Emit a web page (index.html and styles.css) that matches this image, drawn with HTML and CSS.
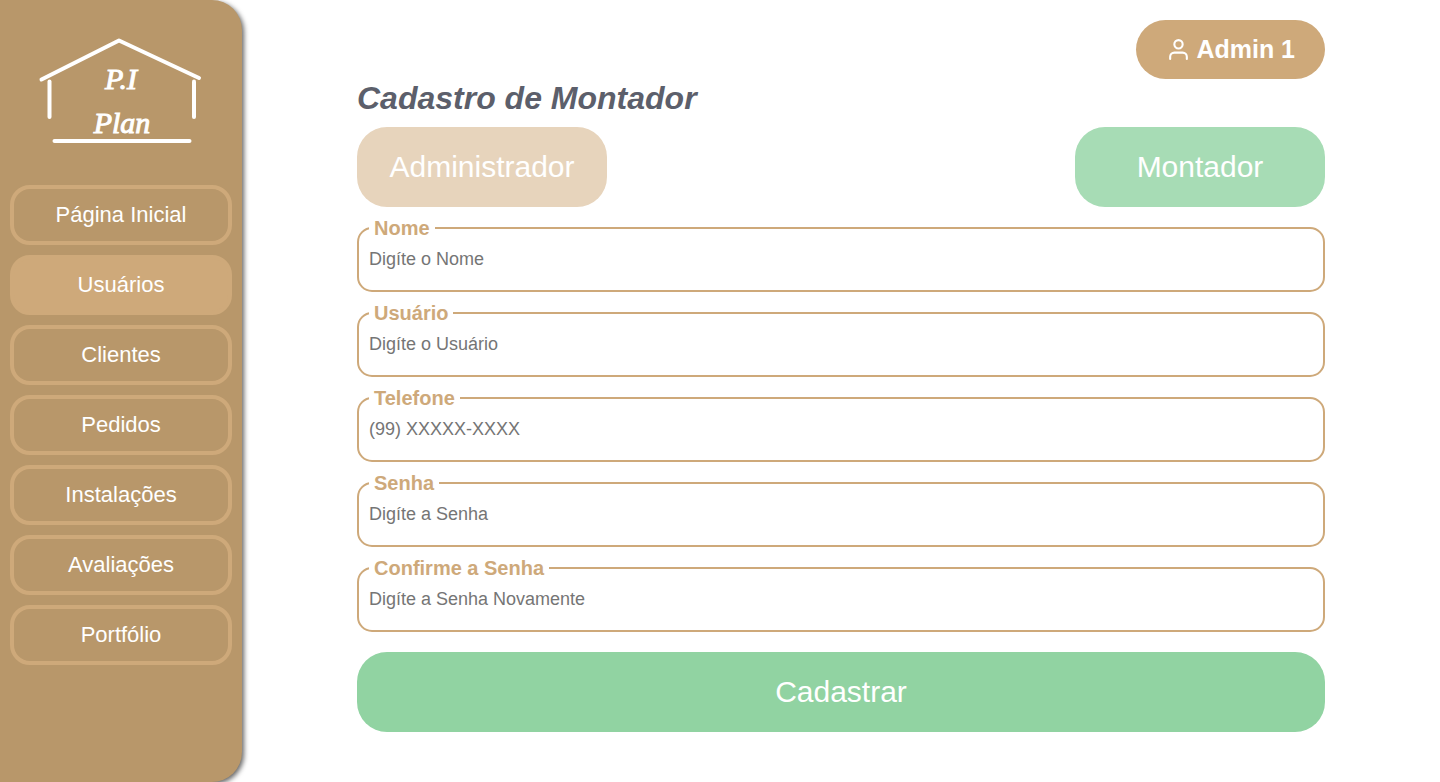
FILE: index.html
```html
<!DOCTYPE html>
<html lang="pt-BR">
<head>
  <meta charset="utf-8">
  <meta name="viewport" content="width=device-width, initial-scale=1">
  <title>Cadastro de Montador</title>
  <link rel="stylesheet" href="styles.css">
</head>
<body>
  <aside class="sidebar">
    <svg class="logo" viewBox="0 0 222 165" role="img" aria-label="P.I Plan">
      <g class="logo-lines">
        <path d="M31.500 59.500L109 20.500L189 58"/>
        <path d="M39.500 61.500V97"/>
        <path d="M184 61.500V97"/>
        <path d="M44.500 121H179.500"/>
      </g>
      <text class="logo-text" x="111" y="69">P.I</text>
      <text class="logo-text" x="112" y="113">Plan</text>
    </svg>
    <nav class="menu">
      <a class="menu-link" href="#inicio">Página Inicial</a>
      <a class="menu-link is-active" href="#usuarios" aria-current="page">Usuários</a>
      <a class="menu-link" href="#clientes">Clientes</a>
      <a class="menu-link" href="#pedidos">Pedidos</a>
      <a class="menu-link" href="#instalacoes">Instalações</a>
      <a class="menu-link" href="#avaliacoes">Avaliações</a>
      <a class="menu-link" href="#portfolio">Portfólio</a>
    </nav>
  </aside>

  <main class="content">
    <header class="topbar">
      <button class="account" type="button">
        <svg class="account-icon" viewBox="0 0 24 24" aria-hidden="true">
          <path d="M20 21v-2a4 4 0 0 0-4-4H8a4 4 0 0 0-4 4v2"/>
          <circle cx="12" cy="7" r="4"/>
        </svg>
        <span>Admin 1</span>
      </button>
    </header>
    <h1 class="title">Cadastro de Montador</h1>
    <div class="roles">
      <button class="button role role-admin" type="button">Administrador</button>
      <button class="button role role-fitter" type="button">Montador</button>
    </div>
    <form class="form">
      <fieldset class="field">
        <legend class="field-name"><label for="nome">Nome</label></legend>
        <input class="field-input" id="nome" type="text" placeholder="Digíte o Nome">
      </fieldset>
      <fieldset class="field">
        <legend class="field-name"><label for="usuario">Usuário</label></legend>
        <input class="field-input" id="usuario" type="text" placeholder="Digíte o Usuário">
      </fieldset>
      <fieldset class="field">
        <legend class="field-name"><label for="telefone">Telefone</label></legend>
        <input class="field-input" id="telefone" type="tel" placeholder="(99) XXXXX-XXXX">
      </fieldset>
      <fieldset class="field">
        <legend class="field-name"><label for="senha">Senha</label></legend>
        <input class="field-input" id="senha" type="password" placeholder="Digíte a Senha">
      </fieldset>
      <fieldset class="field">
        <legend class="field-name"><label for="confirma">Confirme a Senha</label></legend>
        <input class="field-input" id="confirma" type="password" placeholder="Digíte a Senha Novamente">
      </fieldset>
      <button class="button submit" type="submit">Cadastrar</button>
    </form>
  </main>
</body>
</html>
```

FILE: styles.css
```css
:root {
  --brown: #b8976a;
  --sand: #cea97a;
  --sand-light: #e7d4bc;
  --green: #91d3a2;
  --green-light: #a7dcb5;
  --ink: #5c5f6b;
}

* {
  box-sizing: border-box;
}

body {
  display: flex;
  min-height: 100vh;
  margin: 0;
  background: #fff;
  font-family: "Liberation Sans", Arial, sans-serif;
}

button {
  border: 0;
  color: #fff;
  font-family: inherit;
  cursor: pointer;
}

.sidebar {
  flex: none;
  width: 242px;
  padding: 20px 10px;
  border-radius: 0 30px 30px 0;
  background: var(--brown);
  box-shadow: 2px 2px 5px #666;
}

.logo {
  display: block;
  width: 100%;
}

.logo-lines {
  fill: none;
  stroke: #fff;
  stroke-width: 4;
  stroke-linecap: round;
  stroke-linejoin: round;
}

.logo-text {
  fill: #fff;
  stroke: #fff;
  stroke-width: 1;
  font-family: "Liberation Serif", serif;
  font-size: 30px;
  font-style: italic;
  text-anchor: middle;
}

.menu {
  display: flex;
  flex-direction: column;
  gap: 10px;
}

.menu-link {
  display: flex;
  align-items: center;
  justify-content: center;
  height: 60px;
  border: 4px solid var(--sand);
  border-radius: 20px;
  color: #fff;
  font-size: 22px;
  text-decoration: none;
}

.menu-link.is-active {
  background: var(--sand);
}

.content {
  flex: 1;
  padding: 20px 115px;
}

.topbar {
  display: flex;
  justify-content: flex-end;
}

.account {
  display: flex;
  align-items: center;
  gap: 5px;
  padding: 15px 30px;
  border-radius: 30px;
  background: var(--sand);
  font-size: 25px;
  font-weight: bold;
  line-height: 29px;
}

.account-icon {
  width: 25px;
  height: 25px;
  fill: none;
  stroke: #fff;
  stroke-width: 2;
  stroke-linecap: round;
  stroke-linejoin: round;
}

.title {
  margin: 0 0 10px;
  color: var(--ink);
  font-size: 32px;
  font-style: italic;
  line-height: 38px;
}

.roles {
  display: flex;
  justify-content: space-between;
}

.button {
  height: 80px;
  border-radius: 30px;
  font-size: 30px;
}

.role {
  width: 250px;
}

.role-admin {
  background: var(--sand-light);
}

.role-fitter {
  background: var(--green-light);
}

.form {
  display: flex;
  flex-direction: column;
  gap: 10px;
  margin-top: 10px;
}

.field {
  min-width: 0;
  margin: 0;
  padding: 0 10px 11px;
  border: 2px solid var(--sand);
  border-radius: 15px;
}

.field-name {
  padding: 0 5px;
  color: var(--sand);
  font-size: 20px;
  font-weight: bold;
  line-height: 22px;
}

.field-input {
  display: block;
  width: 100%;
  height: 40px;
  padding: 0;
  border: 0;
  outline: 0;
  background: transparent;
  font-family: inherit;
  font-size: 18px;
}

.field-input::placeholder {
  color: #757575;
}

.submit {
  margin-top: 10px;
  background: var(--green);
}
```
